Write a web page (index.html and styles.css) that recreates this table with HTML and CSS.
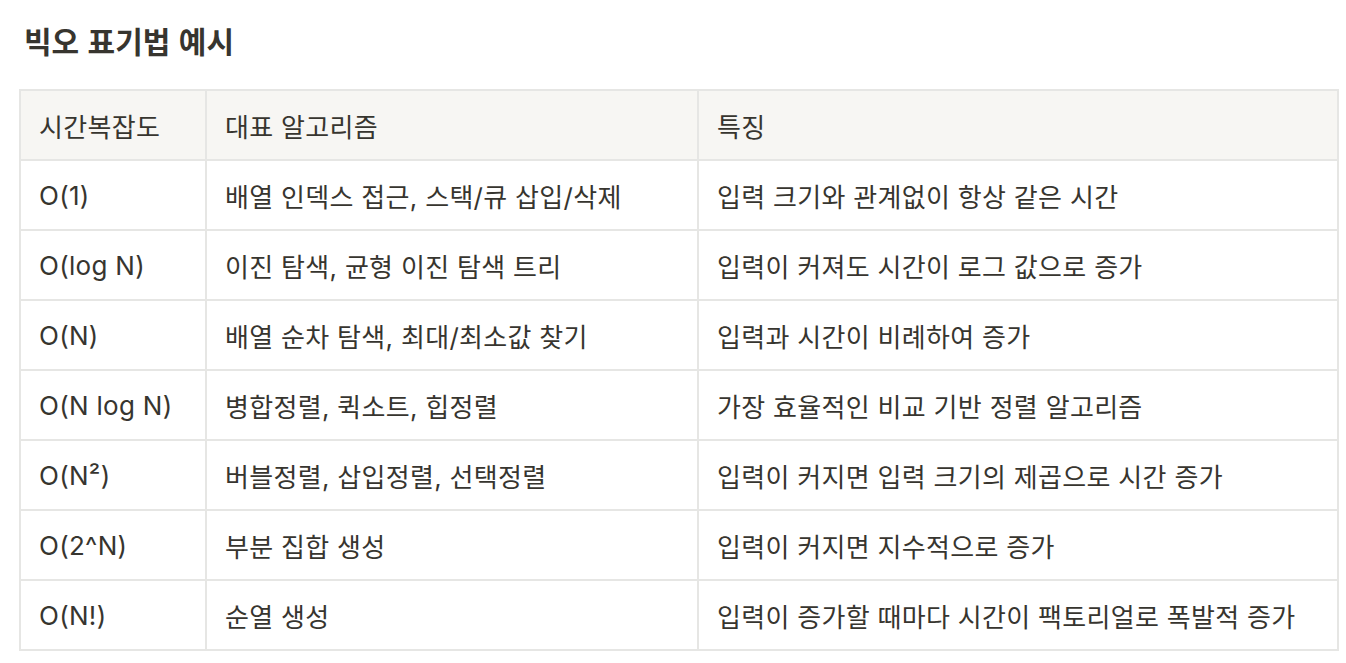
FILE: index.html
```html
<!DOCTYPE html>
<html lang="ko">
<head>
<meta charset="utf-8">
<title>빅오 표기법 예시</title>
<link rel="stylesheet" href="styles.css">
</head>
<body>
<h3 class="title">빅오 표기법 예시</h3>
<table class="grid">
  <colgroup>
    <col class="c1">
    <col class="c2">
    <col class="c3">
  </colgroup>
  <thead>
    <tr class="head"><th>시간복잡도</th><th>대표 알고리즘</th><th>특징</th></tr>
  </thead>
  <tbody>
    <tr><td>O(1)</td><td>배열 인덱스 접근, 스택/큐 삽입/삭제</td><td>입력 크기와 관계없이 항상 같은 시간</td></tr>
    <tr><td>O(log N)</td><td>이진 탐색, 균형 이진 탐색 트리</td><td>입력이 커져도 시간이 로그 값으로 증가</td></tr>
    <tr><td>O(N)</td><td>배열 순차 탐색, 최대/최소값 찾기</td><td>입력과 시간이 비례하여 증가</td></tr>
    <tr><td>O(N log N)</td><td>병합정렬, 퀵소트, 힙정렬</td><td>가장 효율적인 비교 기반 정렬 알고리즘</td></tr>
    <tr><td>O(N²)</td><td>버블정렬, 삽입정렬, 선택정렬</td><td>입력이 커지면 입력 크기의 제곱으로 시간 증가</td></tr>
    <tr><td>O(2^N)</td><td>부분 집합 생성</td><td>입력이 커지면 지수적으로 증가</td></tr>
    <tr><td>O(N!)</td><td>순열 생성</td><td>입력이 증가할 때마다 시간이 팩토리얼로 폭발적 증가</td></tr>
  </tbody>
</table>
</body>
</html>
```

FILE: styles.css
```css
html, body {
  margin: 0;
  background: #ffffff;
}
body {
  padding: 0 0 0 19px;
  font-family: Inter, "Noto Sans CJK KR", sans-serif;
  color: #37352f;
}
.title {
  margin: 0;
  padding: 20px 0 0 5px;
  height: 89px;
  box-sizing: border-box;
  font-family: "Noto Sans CJK KR", sans-serif;
  font-size: 30px;
  line-height: 40px;
  font-weight: 700;
  color: #37352f;
}
.grid {
  border-collapse: collapse;
  table-layout: fixed;
  width: 1318px;
}
.c1 { width: 186px; }
.c2 { width: 492px; }
.c3 { width: 640px; }
.grid th,
.grid td {
  border: 2px solid #e6e6e4;
  height: 70px;
  box-sizing: border-box;
  padding: 0 18px;
  font-size: 26px;
  letter-spacing: 0.3px;
  font-weight: 400;
  text-align: left;
  vertical-align: middle;
  white-space: nowrap;
}
.head th {
  background: #f7f6f3;
}
```
